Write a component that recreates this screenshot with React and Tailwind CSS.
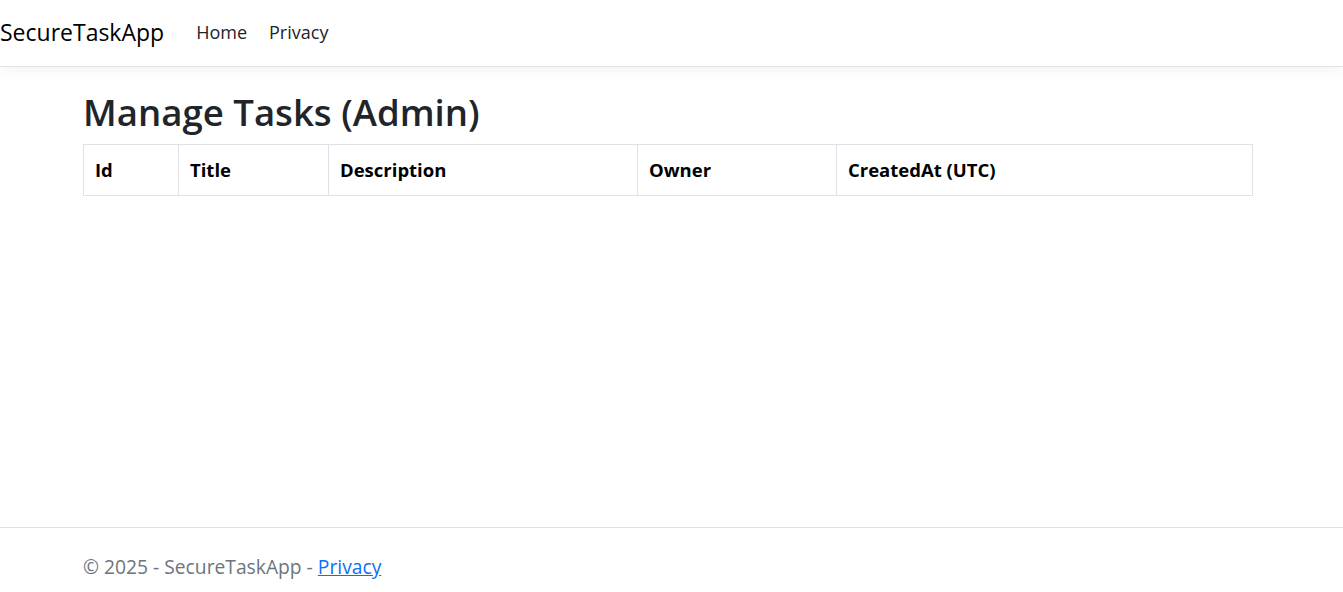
import React from 'react';

const columns = [
  { label: 'Id', width: 'w-[95px]' },
  { label: 'Title', width: 'w-[150px]' },
  { label: 'Description', width: 'w-[309px]' },
  { label: 'Owner', width: 'w-[199px]' },
  { label: 'CreatedAt (UTC)', width: '' },
];

export default function App() {
  return (
    <div className="flex flex-col h-screen bg-white font-['Open_Sans',sans-serif] text-[#212529] overflow-hidden">
      {/* Navbar */}
      <header className="h-[67px] flex-shrink-0 flex items-center pb-[2px] border-b border-[#e5e5e5] shadow-[0_4px_12px_rgba(0,0,0,0.05)] bg-white relative z-10">
        <a className="text-[23px] text-black leading-[32px] mr-[21px]">SecureTaskApp</a>
        <nav className="flex items-center text-[18px] text-[#212529]">
          <a className="px-[11px]">Home</a>
          <a className="px-[11px]">Privacy</a>
        </nav>
      </header>

      {/* Main */}
      <main className="flex-1 pl-[83px] pt-[21px]">
        <h1 className="text-[36.6px] font-semibold leading-[48px] mb-[8px]">Manage Tasks (Admin)</h1>
        <table className="w-[1170px] border-collapse border border-[#dee2e6]">
          <thead>
            <tr>
              {columns.map(col => (
                <th
                  key={col.label}
                  className={`${col.width} border border-[#dee2e6] text-left text-[18.5px] font-bold text-black px-[11px] py-[12px] leading-[26px]`}
                >
                  {col.label}
                </th>
              ))}
            </tr>
          </thead>
          <tbody></tbody>
        </table>
      </main>

      {/* Footer */}
      <footer className="h-[65px] flex-shrink-0 border-t border-[#dee2e6] pl-[83px] pt-[25px]">
        <p className="text-[19.25px] leading-[28px] text-[#6c757d]">
          © 2025 - SecureTaskApp - <a className="text-[#0d6efd] underline">Privacy</a>
        </p>
      </footer>
    </div>
  );
}
